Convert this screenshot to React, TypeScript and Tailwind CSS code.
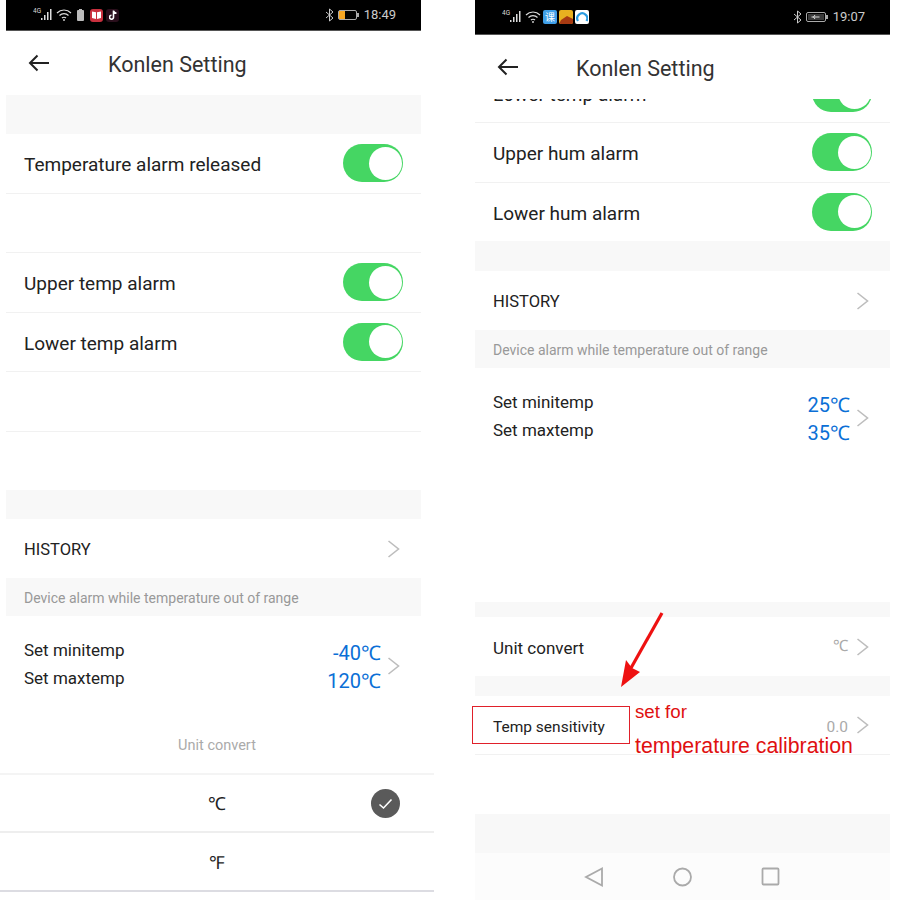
import { ReactNode } from "react"

function Toggle() {
	return (
		<div className="w-[60px] h-[38px] rounded-full bg-[#45d663] flex items-center justify-end pr-[1px]">
			<div className="w-[33px] h-[33px] rounded-full bg-white"></div>
		</div>
	)
}

function Chevron() {
	return (
		<svg width="14" height="20" viewBox="0 0 14 20" fill="none" className="shrink-0 mr-[2px]">
			<path d="M1.5 2 L11.5 10 L1.5 18" stroke="#bdbdbd" strokeWidth="1.6" />
		</svg>
	)
}

type RowProps = { label?: string; right?: ReactNode; border?: boolean; h?: string; size?: string }

function Row({ label, right, border = false, h = "h-[59.5px]", size = "text-[19px]" }: RowProps) {
	return (
		<div className={`${h} ${size} shrink-0 flex items-center justify-between pl-[18px] pr-[18px] text-[#222] bg-white ${border ? "border-b border-[#f1f1f1]" : ""}`}>
			<span className="mt-[4px]">{label}</span>
			{right}
		</div>
	)
}

function Gray({ h, text }: { h: string; text?: string }) {
	return (
		<div className={`${h} shrink-0 bg-[#f8f8f8] flex items-center pl-[18px] pt-[2px] text-[14px] text-[#999]`}>{text}</div>
	)
}

function TempRange({ min, max, h }: { min: string; max: string; h: string }) {
	return (
		<div className={`${h} shrink-0 bg-white`}>
			<div className="h-[100px] flex items-center pl-[18px] pr-[18px] justify-between">
				<div className="flex flex-col gap-[7px] mb-[4px] text-[17px] leading-[21px] text-[#222]">
					<span>Set minitemp</span>
					<span>Set maxtemp</span>
				</div>
				<div className="flex items-center gap-[6px]">
					<div className="flex flex-col items-end mt-[2px] text-[20px] leading-[28px] text-[#0b6fd6]">
						<span>{min}</span>
						<span>{max}</span>
					</div>
					<Chevron />
				</div>
			</div>
		</div>
	)
}

function Signal() {
	return (
		<svg width="21" height="16" viewBox="0 0 21 16" fill="#ddd">
			<text x="0" y="6" fontSize="6.5" fill="#ddd" fontFamily="Roboto, sans-serif">4G</text>
			<rect x="8" y="11" width="1.5" height="2" />
			<rect x="11" y="8" width="1.5" height="5" />
			<rect x="14" y="5" width="1.5" height="8" />
			<rect x="17" y="2" width="1.5" height="11" />
		</svg>
	)
}

function Wifi() {
	return (
		<svg width="16" height="14" viewBox="0 0 16 14" fill="none" stroke="#ddd" strokeWidth="1.2">
			<path d="M1 5 C5 1 11 1 15 5" />
			<path d="M3.5 7.5 C6 5 10 5 12.5 7.5" />
			<path d="M6 10 C7 9 9 9 10 10" />
			<circle cx="8" cy="12" r="0.9" fill="#ddd" stroke="none" />
		</svg>
	)
}

function Bluetooth() {
	return (
		<svg width="9" height="14" viewBox="0 0 9 14" fill="none" stroke="#ccc" strokeWidth="1">
			<path d="M1 4 L8 10 L4.5 13 V1 L8 4 L1 10" />
		</svg>
	)
}

function Back() {
	return (
		<svg width="22" height="18" viewBox="0 0 22 18" fill="none" stroke="#222" strokeWidth="2" className="shrink-0">
			<path d="M21 9 H2 M9.5 1.5 L2 9 L9.5 16.5" />
		</svg>
	)
}

function Left() {
	return (
		<div className="w-[415px] ml-[6px] shrink-0 flex flex-col">
			<div className="h-[31px] shrink-0 bg-black border-b border-[#555] flex items-center justify-between pl-[27px] pr-[25px] text-[13px] text-[#ccc]">
				<div className="flex items-center gap-[2px]">
					<Signal />
					<Wifi />
					<div className="relative w-[7px] h-[11px] mx-[3px] bg-[#bbb] rounded-[1px]">
						<div className="absolute left-[2px] -top-[1px] w-[3px] h-[1px] bg-[#bbb]"></div>
					</div>
					<div className="w-[13px] h-[13px] rounded-[3px] bg-[#c9303e] ml-[1px] flex items-center justify-center">
						<svg width="9" height="8" viewBox="0 0 9 8" fill="#fff">
							<path d="M0 0.5 L4 1.2 V8 L0 7 Z M9 0.5 L5 1.2 V8 L9 7 Z" />
						</svg>
					</div>
					<div className="w-[13px] h-[13px] rounded-[3px] bg-[#2a0f1c] ml-[1px] flex items-center justify-center">
						<svg width="8" height="10" viewBox="0 0 8 10" fill="none" stroke="#fff" strokeWidth="1.6">
							<path d="M4.5 0.5 V7 A2 2 0 1 1 2.5 5.2 M4.5 1 C5 2.5 6 3 7.5 3.2" />
						</svg>
					</div>
				</div>
				<div className="flex items-center">
					<Bluetooth />
					<div className="w-[19px] h-[10px] border border-[#aaa] rounded-[2px] ml-[4px]">
						<div className="w-[6px] h-full bg-[#f5a623]"></div>
					</div>
					<div className="w-[2px] h-[4px] bg-[#aaa]"></div>
					<span className="ml-[5px]">18:49</span>
				</div>
			</div>
			<div className="h-[64px] shrink-0 bg-white flex items-center pl-[22px] text-[21.5px] text-[#333]">
				<Back />
				<span className="ml-[58px] mt-[5px]">Konlen Setting</span>
			</div>
			<Gray h="h-[39px]" />
			<Row label="Temperature alarm released" right={<Toggle />} border />
			<Row border />
			<Row label="Upper temp alarm" right={<Toggle />} border />
			<Row label="Lower temp alarm" right={<Toggle />} border />
			<Row border />
			<Row h="h-[58.5px]" />
			<Gray h="h-[29px]" />
			<Row label="HISTORY" right={<Chevron />} h="h-[59px]" size="text-[16.5px]" />
			<Gray h="h-[38px]" text="Device alarm while temperature out of range" />
			<TempRange min="-40℃" max="120℃" h="h-[100px]" />
			<div className="w-[434px] -ml-[6px] bg-white flex flex-col text-[18px] text-[#222]">
				<div className="h-[59px] pt-[3px] flex items-center justify-center text-[14.5px] text-[#aaa] border-b-2 border-[#f4f4f4]">Unit convert</div>
				<div className="relative h-[58px] flex items-center justify-center border-b-2 border-[#eee]">
					℃
					<div className="absolute left-[371px] top-[14px] w-[29px] h-[29px] rounded-full bg-[#5a5a5a] flex items-center justify-center">
						<svg width="15" height="12" viewBox="0 0 15 12" fill="none" stroke="#fff" strokeWidth="1.6">
							<path d="M1.5 6.5 L5.5 10 L13.5 1.5" />
						</svg>
					</div>
				</div>
				<div className="h-[59px] pt-[2px] flex items-center justify-center border-b-2 border-[#dcdce2]">℉</div>
			</div>
		</div>
	)
}

function Right() {
	return (
		<div className="w-[415px] ml-[54px] shrink-0 flex flex-col h-[900px]">
			<div className="h-[35px] shrink-0 bg-black border-b border-[#555] flex items-center justify-between pl-[27px] pr-[25px] text-[13px] text-[#ccc]">
				<div className="flex items-center gap-[2px]">
					<Signal />
					<Wifi />
					<div className="w-[14px] h-[14px] rounded-[2px] bg-[#3f9fe8] text-[10px] leading-[14px] text-center text-white font-['Noto_Sans_CJK_SC',sans-serif]">课</div>
					<div className="w-[14px] h-[14px] rounded-[2px] bg-[#e8b020] overflow-hidden flex items-end">
						<svg width="14" height="9" viewBox="0 0 14 9">
							<path d="M0 9 L2 5 L8 1 L14 4 V9 Z" fill="#a83a12" />
						</svg>
					</div>
					<div className="w-[14px] h-[14px] rounded-[2px] bg-white flex items-center justify-center">
						<svg width="12" height="12" viewBox="0 0 12 12" fill="none" stroke="#2a9be0" strokeWidth="2.2">
							<path d="M2 10 A5 5 0 1 1 10.5 10" />
						</svg>
					</div>
				</div>
				<div className="flex items-center">
					<Bluetooth />
					<div className="w-[20px] h-[10px] border border-[#aaa] rounded-[2px] ml-[4px] p-[1px]">
						<div className="w-full h-full bg-[#3a3a3a] flex items-center justify-center">
							<svg width="9" height="6" viewBox="0 0 9 6" fill="none" stroke="#ddd" strokeWidth="1">
								<path d="M0.5 3 H8.5 M4 1 L2.5 3 L4 5" />
							</svg>
						</div>
					</div>
					<div className="w-[2px] h-[4px] bg-[#aaa]"></div>
					<span className="ml-[5px]">19:07</span>
				</div>
			</div>
			<div className="h-[64px] shrink-0 bg-white flex items-center pl-[22px] text-[21.5px] text-[#333]">
				<Back />
				<span className="ml-[57px] mt-[5px]">Konlen Setting</span>
			</div>
			{/* list is scrolled, only the end of this row shows under the header */}
			<div className="h-[24px] overflow-hidden flex flex-col justify-end shrink-0">
				<Row label="Lower temp alarm" right={<Toggle />} border />
			</div>
			<Row label="Upper hum alarm" right={<Toggle />} border />
			<Row label="Lower hum alarm" right={<Toggle />} h="h-[58.5px]" />
			<Gray h="h-[30px]" />
			<Row label="HISTORY" right={<Chevron />} h="h-[59px]" size="text-[16.5px]" />
			<Gray h="h-[38px]" text="Device alarm while temperature out of range" />
			<TempRange min="25℃" max="35℃" h="h-[234px]" />
			<Gray h="h-[15px]" />
			<Row label="Unit convert" right={<span className="flex items-center gap-[8px] text-[15.5px] text-[#aaa]">℃<Chevron /></span>} h="h-[59px]" size="text-[17px]" />
			<Gray h="h-[20px]" />
			<div className="h-[59px] shrink-0 flex items-center justify-between pl-[18px] pr-[18px] text-[15.5px] text-[#222] border-b border-[#f1f1f1]">
				<span className="mt-[6px]">Temp sensitivity</span>
				<span className="flex items-center gap-[8px] text-[15.5px] text-[#aaa]">
					<span className="mt-[5px]">0.0</span>
					<Chevron />
				</span>
			</div>
			<div className="h-[59px] shrink-0 bg-white"></div>
			<Gray h="h-[39px]" />
			<div className="flex-1 bg-[#fcfcfc] flex items-center pl-[109px] gap-[68px] pt-[1px]">
				<svg width="20" height="20" viewBox="0 0 20 20" fill="none" stroke="#aaa" strokeWidth="1.8">
					<path d="M18 1.5 L2 10 L18 18.5 Z" />
				</svg>
				<svg width="20" height="20" viewBox="0 0 20 20" fill="none" stroke="#aaa" strokeWidth="1.8">
					<circle cx="10.5" cy="10" r="8.5" />
				</svg>
				<svg width="20" height="20" viewBox="0 0 20 20" fill="none" stroke="#aaa" strokeWidth="1.8">
					<rect x="2.5" y="1.5" width="16" height="16" rx="1" />
				</svg>
			</div>
		</div>
	)
}

export default function App() {
	return (
		<div className="relative w-[900px] h-[900px] overflow-hidden bg-white flex font-['Roboto',sans-serif]">
			<Left />
			<Right />

			{/* red notes drawn over the right screen */}
			<div className="absolute left-[472px] top-[706px] w-[158px] h-[38px] border border-[#e0202a]"></div>
			<svg className="absolute left-[615px] top-[608px]" width="55" height="85" viewBox="0 0 55 85">
				<path d="M47 5 L16 60" stroke="#ee1111" strokeWidth="3.2" fill="none" />
				<path d="M6 79 L11 52 L17 60 L25 64 Z" fill="#ee1111" />
			</svg>
			<div className="absolute left-[635px] top-[700px] text-[18.7px] leading-[24px] text-[#e01010] font-['Liberation_Sans',sans-serif]">set for</div>
			<div className="absolute left-[635px] top-[733px] text-[21.3px] leading-[26px] text-[#e01010] font-['Liberation_Sans',sans-serif]">temperature calibration</div>
		</div>
	)
}
